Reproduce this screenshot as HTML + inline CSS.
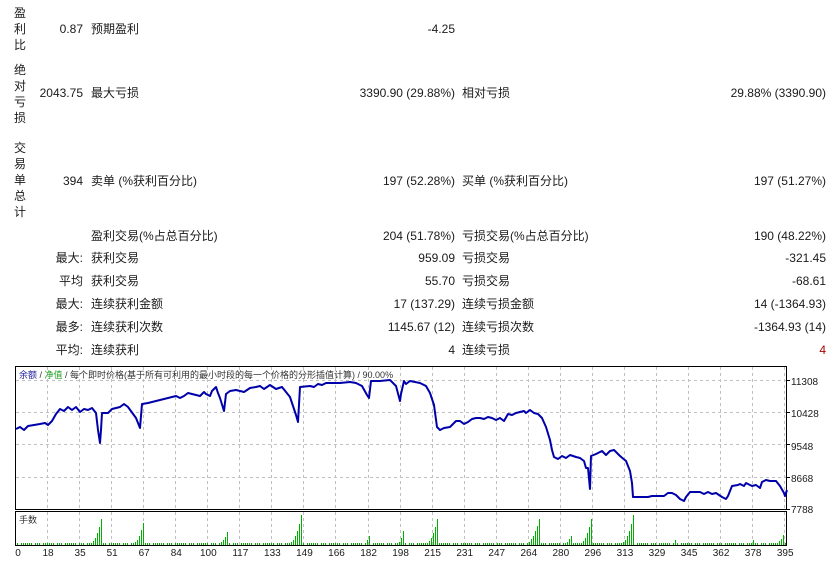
<!DOCTYPE html>
<html><head><meta charset="utf-8"><style>
body{margin:0;width:834px;height:564px;background:#fff;overflow:hidden;position:relative;font-family:"Liberation Sans","Noto Sans CJK SC",sans-serif;font-size:12px;color:#1a1a1a}
.t{position:absolute;white-space:nowrap;line-height:14px}
.r{text-align:right}
.v{position:absolute;left:13px;width:14px;text-align:center;line-height:16px}
</style></head><body>
<div class="v" style="top:5px">盈<br>利<br>比</div>
<div class="v" style="top:62px">绝<br>对<br>亏<br>损</div>
<div class="v" style="top:140px">交<br>易<br>单<br>总<br>计</div>

<div class="t r" style="right:751px;top:22px">0.87</div><div class="t" style="left:91px;top:22px">预期盈利</div><div class="t r" style="right:379px;top:22px">-4.25</div>

<div class="t r" style="right:751px;top:86px">2043.75</div><div class="t" style="left:91px;top:86px">最大亏损</div><div class="t r" style="right:379px;top:86px">3390.90 (29.88%)</div><div class="t" style="left:462px;top:86px">相对亏损</div><div class="t r" style="right:8px;top:86px">29.88% (3390.90)</div>

<div class="t r" style="right:751px;top:174px">394</div><div class="t" style="left:91px;top:174px">卖单 (%获利百分比)</div><div class="t r" style="right:379px;top:174px">197 (52.28%)</div><div class="t" style="left:462px;top:174px">买单 (%获利百分比)</div><div class="t r" style="right:8px;top:174px">197 (51.27%)</div>

<div class="t" style="left:91px;top:229px">盈利交易(%占总百分比)</div><div class="t r" style="right:379px;top:229px">204 (51.78%)</div><div class="t" style="left:462px;top:229px">亏损交易(%占总百分比)</div><div class="t r" style="right:8px;top:229px">190 (48.22%)</div>

<div class="t r" style="right:751px;top:251px">最大:</div><div class="t" style="left:91px;top:251px">获利交易</div><div class="t r" style="right:379px;top:251px">959.09</div><div class="t" style="left:462px;top:251px">亏损交易</div><div class="t r" style="right:8px;top:251px">-321.45</div>

<div class="t r" style="right:751px;top:274px">平均</div><div class="t" style="left:91px;top:274px">获利交易</div><div class="t r" style="right:379px;top:274px">55.70</div><div class="t" style="left:462px;top:274px">亏损交易</div><div class="t r" style="right:8px;top:274px">-68.61</div>

<div class="t r" style="right:751px;top:297px">最大:</div><div class="t" style="left:91px;top:297px">连续获利金额</div><div class="t r" style="right:379px;top:297px">17 (137.29)</div><div class="t" style="left:462px;top:297px">连续亏损金额</div><div class="t r" style="right:8px;top:297px">14 (-1364.93)</div>

<div class="t r" style="right:751px;top:320px">最多:</div><div class="t" style="left:91px;top:320px">连续获利次数</div><div class="t r" style="right:379px;top:320px">1145.67 (12)</div><div class="t" style="left:462px;top:320px">连续亏损次数</div><div class="t r" style="right:8px;top:320px">-1364.93 (14)</div>

<div class="t r" style="right:751px;top:343px">平均:</div><div class="t" style="left:91px;top:343px">连续获利</div><div class="t r" style="right:379px;top:343px">4</div><div class="t" style="left:462px;top:343px">连续亏损</div><div class="t r" style="right:8px;top:343px;color:#a00">4</div>

<svg id="ch" width="834" height="564" style="position:absolute;left:0;top:0" font-family="Liberation Sans, Noto Sans CJK SC, sans-serif">
<g stroke="#c0c0c0" stroke-dasharray="3,3" stroke-width="1" id="grid" shape-rendering="crispEdges"></g>
<g id="bars" shape-rendering="crispEdges"></g>
<rect x="15.5" y="366.5" width="771" height="143" fill="none" stroke="#000"/>
<rect x="15.5" y="511.5" width="771" height="34" fill="none" stroke="#000"/>
<g font-size="10" fill="#1a1a1a">
<text x="791" y="385">11308</text><text x="791" y="417">10428</text><text x="791" y="450">9548</text><text x="791" y="482">8668</text><text x="791" y="513">7788</text>
</g>
<g stroke="#000"><line x1="786" y1="380.5" x2="790" y2="380.5"/><line x1="786" y1="412.5" x2="790" y2="412.5"/><line x1="786" y1="444.5" x2="790" y2="444.5"/><line x1="786" y1="477.5" x2="790" y2="477.5"/><line x1="786" y1="509.5" x2="790" y2="509.5"/></g>
<text x="19" y="378" font-size="9"><tspan fill="#2020a0">余额</tspan><tspan fill="#333"> / </tspan><tspan fill="#20a020">净值</tspan><tspan fill="#333"> / 每个即时价格(基于所有可利用的最小时段的每一个价格的分形插值计算) / 90.00%</tspan></text>
<text x="19" y="523" font-size="9" fill="#333">手数</text>
<polyline fill="none" stroke="#0000aa" stroke-width="2" stroke-linejoin="round" points="16,429 20,427 24,430 28,426 40,424 45,423 48,425 52,421 56,414 60,409 64,411 68,407 72,410 76,407 80,412 84,409 88,410 92,408 96,413 98,430 100,443 101,430 102,413 108,413 112,409 120,407 124,404 128,407 136,418 140,428 142,404 148,403 160,400 172,397 176,396 180,398 184,396 188,393 192,394 200,396 204,392 206,394 210,396 212,391 216,387 218,393 220,398 224,411 226,394 230,391 236,390 244,392 250,388 256,387 260,386 264,389 270,385 276,389 282,387 290,397 296,415 298,422 300,387 310,386 314,387 318,384 322,385 326,383 340,383 350,382 356,383 362,386 367,395 369,398 371,381 380,381 390,380 396,386 400,401 401,394 404,381 406,384 410,381 420,383 426,386 430,393 434,405 437,427 440,430 444,428 450,427 452,425 456,421 460,421 464,424 468,422 472,419 476,418 480,418 484,419 488,417 492,418 496,420 500,418 504,421 508,414 512,415 516,413 520,412 524,411 526,413 530,410 534,413 538,414 542,418 546,427 550,440 552,450 554,457 558,459 562,456 566,458 570,455 576,457 580,458 584,461 586,468 588,468 590,489 591,456 596,454 602,451 606,455 610,451 614,450 620,456 626,461 630,471 632,483 633,497 644,497 648,497 652,496 656,496 664,496 668,493 672,493 676,495 680,499 684,501 686,497 690,492 700,492 704,494 708,492 712,494 716,493 722,497 726,499 728,496 732,486 738,485 740,484 744,486 746,483 752,486 756,485 760,488 762,482 766,480 770,481 776,481 780,486 784,493 785,496 787,490"/>
<g font-size="10" fill="#1a1a1a" text-anchor="middle" id="xl"></g>
</svg>
<script>
var ns="http://www.w3.org/2000/svg";
var g=document.getElementById('grid');
function ln(x1,y1,x2,y2){var l=document.createElementNS(ns,'line');l.setAttribute('x1',x1);l.setAttribute('y1',y1);l.setAttribute('x2',x2);l.setAttribute('y2',y2);g.appendChild(l);}
for(var x=47.5;x<786;x+=32.05){var xx=Math.floor(x)+0.5;ln(xx,367,xx,509);ln(xx,512,xx,545);}
[380.5,412.5,444.5,477.5].forEach(function(y){ln(16,y,786,y);});
var labs=[0,18,35,51,67,84,100,117,133,149,166,182,198,215,231,247,264,280,296,313,329,345,362,378,395];
var xl=document.getElementById('xl');
labs.forEach(function(v,i){var t=document.createElementNS(ns,'text');t.setAttribute('x',i==0?18:16+i*32.05);t.setAttribute('y',556);t.textContent=v;xl.appendChild(t);});
var spikes=[[102,30,12],[143,22,10],[227,13,8],[301,30,12],[370,12,6],[403,14,6],[438,30,12],[540,30,14],[572,11,8],[592,30,12],[633,30,12],[676,7,4],[754,7,4],[784,13,8]];
var b=document.getElementById('bars');
for(var x=17;x<786;x+=2){var h=((x*7)%11<2)?0:2;spikes.forEach(function(s){if(x<=s[0]&&x>=s[0]-s[2]){var f=(x-(s[0]-s[2]))/s[2];h=Math.max(h,2+(s[1]-2)*f*f);}});h=Math.round(h);if(h>0){var r=document.createElementNS(ns,'rect');r.setAttribute('x',x);r.setAttribute('y',545-h);r.setAttribute('width',1);r.setAttribute('height',h);r.setAttribute('fill','#00b000');b.appendChild(r);}}
</script>
</body></html>
